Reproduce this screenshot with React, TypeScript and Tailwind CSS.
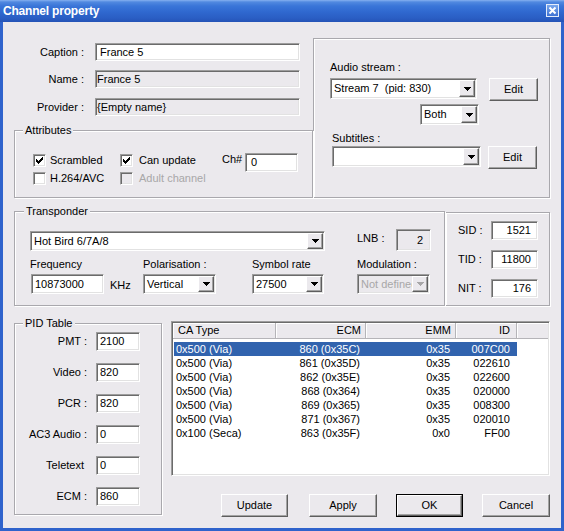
import React from "react";

const SUNKEN =
  "border border-t-[#9D9D9D] border-l-[#9D9D9D] border-b-white border-r-white shadow-[inset_1px_1px_0_#6B6B6B,inset_-1px_-1px_0_#E2E2E2]";
const RAISED =
  "border border-t-white border-l-white border-b-[#5E5E5E] border-r-[#5E5E5E] shadow-[inset_-1px_-1px_0_#A3A3A3]";
const ETCHED = "border border-[#A9A8AD] shadow-[inset_1px_1px_0_#FFFFFF,1px_1px_0_#FFFFFF]";

function Arrow({ color = "#000" }: { color?: string }) {
  return (
    <svg width="7" height="4" viewBox="0 0 7 4" shapeRendering="crispEdges">
      <polygon
        points="0,0 7,0 7,1 6,1 6,2 5,2 5,3 4,3 4,4 3,4 3,3 2,3 2,2 1,2 1,1 0,1"
        fill={color}
      />
    </svg>
  );
}

function Combo({
  value,
  cls,
  disabled = false,
}: {
  value: string;
  cls: string;
  disabled?: boolean;
}) {
  return (
    <div
      className={`${SUNKEN} p-[1px] flex shrink-0 ${disabled ? "bg-[#EBE9ED]" : "bg-white"} ${cls}`}
    >
      <div
        className={`flex-1 min-w-0 flex items-center pl-[2px] overflow-hidden whitespace-pre ${
          disabled ? "text-[#A8A7A8]" : ""
        }`}
      >
        {value}
      </div>
      <div className={`w-[16px] shrink-0 flex items-center justify-center bg-[#EBE9ED] ${RAISED}`}>
        <Arrow color={disabled ? "#A8A7A8" : "#000"} />
      </div>
    </div>
  );
}

function Field({
  value,
  cls,
  textCls = "",
  gray = false,
}: {
  value: string;
  cls: string;
  textCls?: string;
  gray?: boolean;
}) {
  return (
    <div
      className={`${SUNKEN} p-[1px] flex items-center shrink-0 overflow-hidden whitespace-nowrap ${
        gray ? "bg-[#EBE9ED]" : "bg-white"
      } ${cls}`}
    >
      <span className={textCls}>{value}</span>
    </div>
  );
}

function Check({ checked = false, disabled = false }: { checked?: boolean; disabled?: boolean }) {
  return (
    <span
      className={`w-[13px] h-[13px] shrink-0 flex items-center justify-center ${SUNKEN} ${
        disabled ? "bg-[#EBE9ED]" : "bg-white"
      }`}
    >
      {checked && (
        <svg width="7" height="7" viewBox="0 0 7 7" shapeRendering="crispEdges">
          <path
            d="M6 0h1v1h-1z M5 1h2v1h-2z M0 2h1v1h-1z M4 2h3v1h-3z M0 3h2v1h-2z M3 3h3v1h-3z M0 4h5v1h-5z M1 5h3v1h-3z M2 6h1v1h-1z"
            fill="#000"
          />
        </svg>
      )}
    </span>
  );
}

function Btn({ label, cls }: { label: string; cls: string }) {
  return (
    <div className={`${RAISED} bg-[#EBE9ED] flex items-center justify-center shrink-0 ${cls}`}>
      {label}
    </div>
  );
}

const rows = [
  ["0x500 (Via)", "860 (0x35C)", "0x35", "007C00"],
  ["0x500 (Via)", "861 (0x35D)", "0x35", "022610"],
  ["0x500 (Via)", "862 (0x35E)", "0x35", "022600"],
  ["0x500 (Via)", "868 (0x364)", "0x35", "020000"],
  ["0x500 (Via)", "869 (0x365)", "0x35", "008300"],
  ["0x500 (Via)", "871 (0x367)", "0x35", "020010"],
  ["0x100 (Seca)", "863 (0x35F)", "0x0", "FF00"],
];

const pids: [string, string, string][] = [
  ["PMT :", "2100", ""],
  ["Video :", "820", ""],
  ["PCR :", "820", ""],
  ["AC3 Audio :", "0", ""],
  ["Teletext", "0", "pr-[3px]"],
  ["ECM :", "860", ""],
];

export default function App() {
  return (
    <div className="w-[564px] h-[531px] flex flex-col font-['Liberation_Sans',Arial,sans-serif] text-[11px] leading-[13px] text-black select-none">
      {/* Title bar */}
      <div className="h-[22px] shrink-0 flex items-center justify-between pl-[3px] pr-[5px] bg-[linear-gradient(to_bottom,#86B0F0_0px,#5189E0_2px,#3A75D8_6px,#2F68CF_12px,#2A5EC4_18px,#2453B6_22px)]">
        <span className="text-white font-bold text-[12px] leading-[14px] tracking-[-0.2px]">
          Channel property
        </span>
        <div className="w-[13px] h-[13px] mb-[1px] border border-[#E4ECFA] bg-[linear-gradient(to_bottom,#7AA7EC,#3E72D4)] flex items-center justify-center">
          <svg width="9" height="9" viewBox="0 0 9 9">
            <path d="M1.5 1.5 L7.5 7.5 M7.5 1.5 L1.5 7.5" stroke="#fff" strokeWidth="2" />
          </svg>
        </div>
      </div>

      {/* Body */}
      <div className="flex-1 flex flex-col bg-[#EBE9ED] border-x-[3px] border-b-[3px] border-[#2F63CC] pl-[11px] pr-[11px] pt-[16px]">
        {/* Top row */}
        <div className="flex h-[160px] shrink-0">
          <div className="w-[299px] flex flex-col">
            <div className="flex flex-col pt-[5px]">
              <div className="flex items-center h-[18px]">
                <span className="w-[70px] text-right">Caption :</span>
                <Field value="France 5" cls="ml-[11px] w-[205px] h-[18px]" textCls="pl-[3px]" />
              </div>
              <div className="flex items-center h-[18px] mt-[9px]">
                <span className="w-[70px] text-right">Name :</span>
                <Field value="France 5" gray cls="ml-[11px] w-[205px] h-[18px]" />
              </div>
              <div className="flex items-center h-[18px] mt-[10px]">
                <span className="w-[70px] text-right">Provider :</span>
                <Field value="{Empty name}" gray cls="ml-[11px] w-[205px] h-[18px]" />
              </div>
            </div>

            <div className={`relative mt-[14px] h-[68px] ${ETCHED} pl-[18px] pt-[22px]`}>
              <span className="absolute left-[8px] -top-[7px] px-[2px] bg-[#EBE9ED]">Attributes</span>
              <div className="flex items-start">
                <div className="w-[87px] flex items-center mt-[1px]">
                  <Check checked />
                  <span className="ml-[4px]">Scrambled</span>
                </div>
                <div className="w-[102px] flex items-center mt-[1px]">
                  <Check checked />
                  <span className="ml-[6px]">Can update</span>
                </div>
                <span className="w-[23px]">Ch#</span>
                <Field value="0" cls="w-[53px] h-[19px]" textCls="pl-[4px]" />
              </div>
              <div className="flex items-start">
                <div className="w-[87px] flex items-center">
                  <Check />
                  <span className="ml-[4px]">H.264/AVC</span>
                </div>
                <div className="flex items-center">
                  <Check disabled />
                  <span className="ml-[6px] text-[#A8A7A8]">Adult channel</span>
                </div>
              </div>
            </div>
          </div>

          <div className={`w-[237px] flex flex-col items-start ${ETCHED} pl-[16px] pt-[22px]`}>
            <span>Audio stream :</span>
            <div className="flex items-start mt-[4px]">
              <Combo value="Stream 7  (pid: 830)" cls="w-[147px] h-[21px]" />
              <Btn label="Edit" cls="ml-[12px] w-[49px] h-[23px]" />
            </div>
            <Combo value="Both" cls="ml-[90px] mt-[3px] w-[59px] h-[21px]" />
            <span className="ml-[2px] mt-[7px]">Subtitles :</span>
            <div className="flex items-start mt-[1px] ml-[2px]">
              <Combo value="" cls="w-[149px] h-[21px]" />
              <Btn label="Edit" cls="ml-[7px] w-[49px] h-[23px]" />
            </div>
          </div>
        </div>

        {/* Transponder row */}
        <div className="flex mt-[13px] shrink-0">
          <div className={`relative w-[431px] h-[95px] ${ETCHED} pl-[15px] pt-[17px]`}>
            <span className="absolute left-[9px] -top-[7px] px-[2px] bg-[#EBE9ED]">Transponder</span>
            <div className="flex items-start">
              <Combo value="Hot Bird 6/7A/8" cls="mt-[2px] w-[295px] h-[20px]" />
              <span className="ml-[32px] mt-[3px] w-[39px]">LNB :</span>
              <Field value="2" gray cls="w-[35px] h-[22px] justify-end" textCls="mr-[6px]" />
            </div>
            <div className="flex items-start mt-[7px]">
              <div className="w-[113px] flex flex-col">
                <span>Frequency</span>
                <div className="flex items-center mt-[3px]">
                  <Field value="10873000" cls="ml-[1px] w-[73px] h-[20px]" textCls="pl-[2px]" />
                  <span className="ml-[6px] pt-[2px]">KHz</span>
                </div>
              </div>
              <div className="w-[109px] flex flex-col">
                <span>Polarisation :</span>
                <Combo value="Vertical" cls="mt-[3px] w-[73px] h-[20px]" />
              </div>
              <div className="w-[105px] flex flex-col">
                <span>Symbol rate</span>
                <Combo value="27500" cls="mt-[3px] w-[72px] h-[20px]" />
              </div>
              <div className="flex flex-col">
                <span>Modulation :</span>
                <Combo value="Not defined" disabled cls="mt-[3px] w-[73px] h-[20px]" />
              </div>
            </div>
          </div>

          <div className={`w-[105px] h-[94px] mt-[1px] ${ETCHED} pl-[12px] pt-[8px] flex flex-col gap-[10px]`}>
            {[
              ["SID :", "1521"],
              ["TID :", "11800"],
              ["NIT :", "176"],
            ].map(([l, v]) => (
              <div key={l} className="flex items-center">
                <span className="w-[33px]">{l}</span>
                <Field value={v} cls="w-[47px] h-[19px] justify-end" textCls="mr-[5px]" />
              </div>
            ))}
          </div>
        </div>

        {/* Bottom row */}
        <div className="flex items-start mt-[15px]">
          <div className={`relative mt-[2px] w-[148px] h-[192px] shrink-0 ${ETCHED} pt-[8px]`}>
            <span className="absolute left-[8px] -top-[7px] px-[2px] bg-[#EBE9ED]">PID Table</span>
            <div className="flex flex-col gap-[12px]">
              {pids.map(([l, v, pr]) => (
                <div key={l} className="flex items-center">
                  <span className={`w-[72px] text-right ${pr}`}>{l}</span>
                  <Field value={v} cls="ml-[9px] w-[44px] h-[19px]" textCls="pl-[2px]" />
                </div>
              ))}
            </div>
          </div>

          <div className="ml-[9px] flex-1 flex flex-col">
            <div className={`h-[155px] bg-white ${SUNKEN} p-[1px] flex flex-col overflow-hidden`}>
              <div className="flex h-[16px] shrink-0">
                <div className="w-[103px] flex items-center pl-[5px] bg-[#EBE9ED] border-r border-b border-[#B5B4B8] shadow-[inset_1px_1px_0_#fff]">
                  CA Type
                </div>
                <div className="w-[90px] flex items-center justify-end pr-[4px] bg-[#EBE9ED] border-r border-b border-[#B5B4B8] shadow-[inset_1px_1px_0_#fff]">
                  ECM
                </div>
                <div className="w-[90px] flex items-center justify-end pr-[4px] bg-[#EBE9ED] border-r border-b border-[#B5B4B8] shadow-[inset_1px_1px_0_#fff]">
                  EMM
                </div>
                <div className="w-[61px] flex items-center justify-end pr-[6px] bg-[#EBE9ED] border-r border-b border-[#B5B4B8] shadow-[inset_1px_1px_0_#fff]">
                  ID
                </div>
                <div className="flex-1 bg-[#EBE9ED] border-b border-[#B5B4B8] shadow-[inset_1px_1px_0_#fff]" />
              </div>
              <div className="pt-[3px] pl-[1px] flex flex-col">
                {rows.map((r, i) => (
                  <div
                    key={i}
                    className={`w-[343px] h-[14px] flex items-center ${
                      i === 0 ? "bg-[#3163AE] text-white" : ""
                    }`}
                  >
                    <span className="w-[102px] pl-[2px]">{r[0]}</span>
                    <span className="w-[90px] text-right pr-[6px]">{r[1]}</span>
                    <span className="w-[90px] text-right pr-[6px]">{r[2]}</span>
                    <span className="w-[61px] text-right pr-[7px]">{r[3]}</span>
                  </div>
                ))}
              </div>
            </div>

            <div className="flex mt-[18px]">
              <Btn label="Update" cls="ml-[50px] w-[67px] h-[23px]" />
              <Btn label="Apply" cls="ml-[21px] w-[68px] h-[23px]" />
              <div className="ml-[19px] w-[67px] h-[23px] border border-black flex shrink-0">
                <div className={`${RAISED} bg-[#EBE9ED] flex-1 flex items-center justify-center`}>OK</div>
              </div>
              <Btn label="Cancel" cls="ml-[19px] w-[68px] h-[23px]" />
            </div>
          </div>
        </div>
      </div>
    </div>
  );
}
